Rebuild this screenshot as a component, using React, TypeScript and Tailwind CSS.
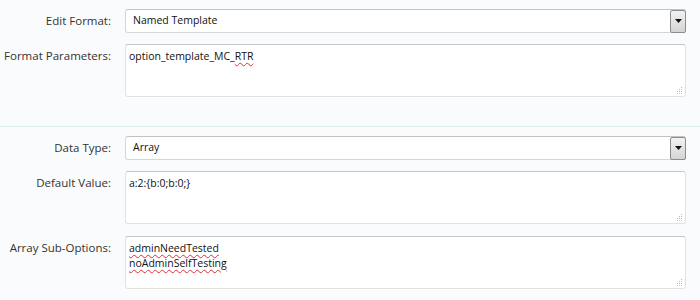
import React from 'react';

const font = { fontFamily: '"Open Sans", "Noto Sans", sans-serif' };

function Grip() {
    return (
        <svg className="absolute right-[2px] bottom-[2px]" width="7" height="7" viewBox="0 0 7 7">
            <rect x="5" y="0" width="1" height="1" fill="#b5b5b5" />
            <rect x="3" y="2" width="1" height="1" fill="#b5b5b5" />
            <rect x="5" y="2" width="1" height="1" fill="#b5b5b5" />
            <rect x="1" y="4" width="1" height="1" fill="#b5b5b5" />
            <rect x="3" y="4" width="1" height="1" fill="#b5b5b5" />
            <rect x="5" y="4" width="1" height="1" fill="#b5b5b5" />
            <rect x="1" y="6" width="1" height="1" fill="#c8c8c8" />
            <rect x="3" y="6" width="1" height="1" fill="#c8c8c8" />
            <rect x="5" y="6" width="1" height="1" fill="#c8c8c8" />
        </svg>
    );
}

function Squiggle({ children }: { children: React.ReactNode }) {
    return <span className="underline decoration-wavy decoration-[#e0303a] decoration-1 underline-offset-2">{children}</span>;
}

function SelectRow({ label, value }: { label: string; value: string }) {
    return (
        <div className="flex items-center">
            <div className="w-[111px] text-right text-[11.5px] text-[#333]">{label}</div>
            <div className="ml-[14px] mr-[14px] flex-1 h-[24px] flex items-center bg-white border border-[#d6d6d6] border-t-[#c2c2c2] rounded-[3px]">
                <span className="pl-[7px] text-[10.5px] text-[#111]">{value}</span>
                <div className="ml-auto h-[23px] w-[16px] -mr-px flex items-center justify-center border border-[#8c8c8c] rounded-[2px] bg-gradient-to-b from-[#f2f2f2] to-[#d4d4d4]">
                    <svg width="7" height="4" viewBox="0 0 7 4"><path d="M0 0h7L3.5 4z" fill="#111" /></svg>
                </div>
            </div>
        </div>
    );
}

function AreaRow({ label, children }: { label: string; children: React.ReactNode }) {
    return (
        <div className="flex items-start">
            <div className="w-[111px] pt-[4px] text-right text-[11.5px] text-[#333] leading-[16px]">{label}</div>
            <div className="relative ml-[14px] mr-[14px] flex-1 h-[53px] bg-white border border-[#e2e2e2] border-t-[#c6c6c6] rounded-[3px] px-[3px] pt-[4px] text-[10.5px] leading-[15px] text-[#111]">
                {children}
                <Grip />
            </div>
        </div>
    );
}

export default function App() {
    return (
        <div className="w-[700px] h-[300px] bg-[#fafbfc] pt-[9px] overflow-hidden" style={font}>
            <SelectRow label="Edit Format:" value="Named Template" />
            <div className="mt-[11px]">
                <AreaRow label="Format Parameters:">
                    option_template_MC_<Squiggle>RTR</Squiggle>
                </AreaRow>
            </div>
            <div className="mt-[29px] h-px bg-[#dcebee]" />
            <div className="mt-[9px]">
                <SelectRow label="Data Type:" value="Array" />
            </div>
            <div className="mt-[11px]">
                <AreaRow label="Default Value:">a:2:{'{'}b:0;b:0;{'}'}</AreaRow>
            </div>
            <div className="mt-[12px]">
                <AreaRow label="Array Sub-Options:">
                    <div><Squiggle>adminNeedTested</Squiggle></div>
                    <div><Squiggle>noAdminSelfTesting</Squiggle></div>
                </AreaRow>
            </div>
        </div>
    );
}
